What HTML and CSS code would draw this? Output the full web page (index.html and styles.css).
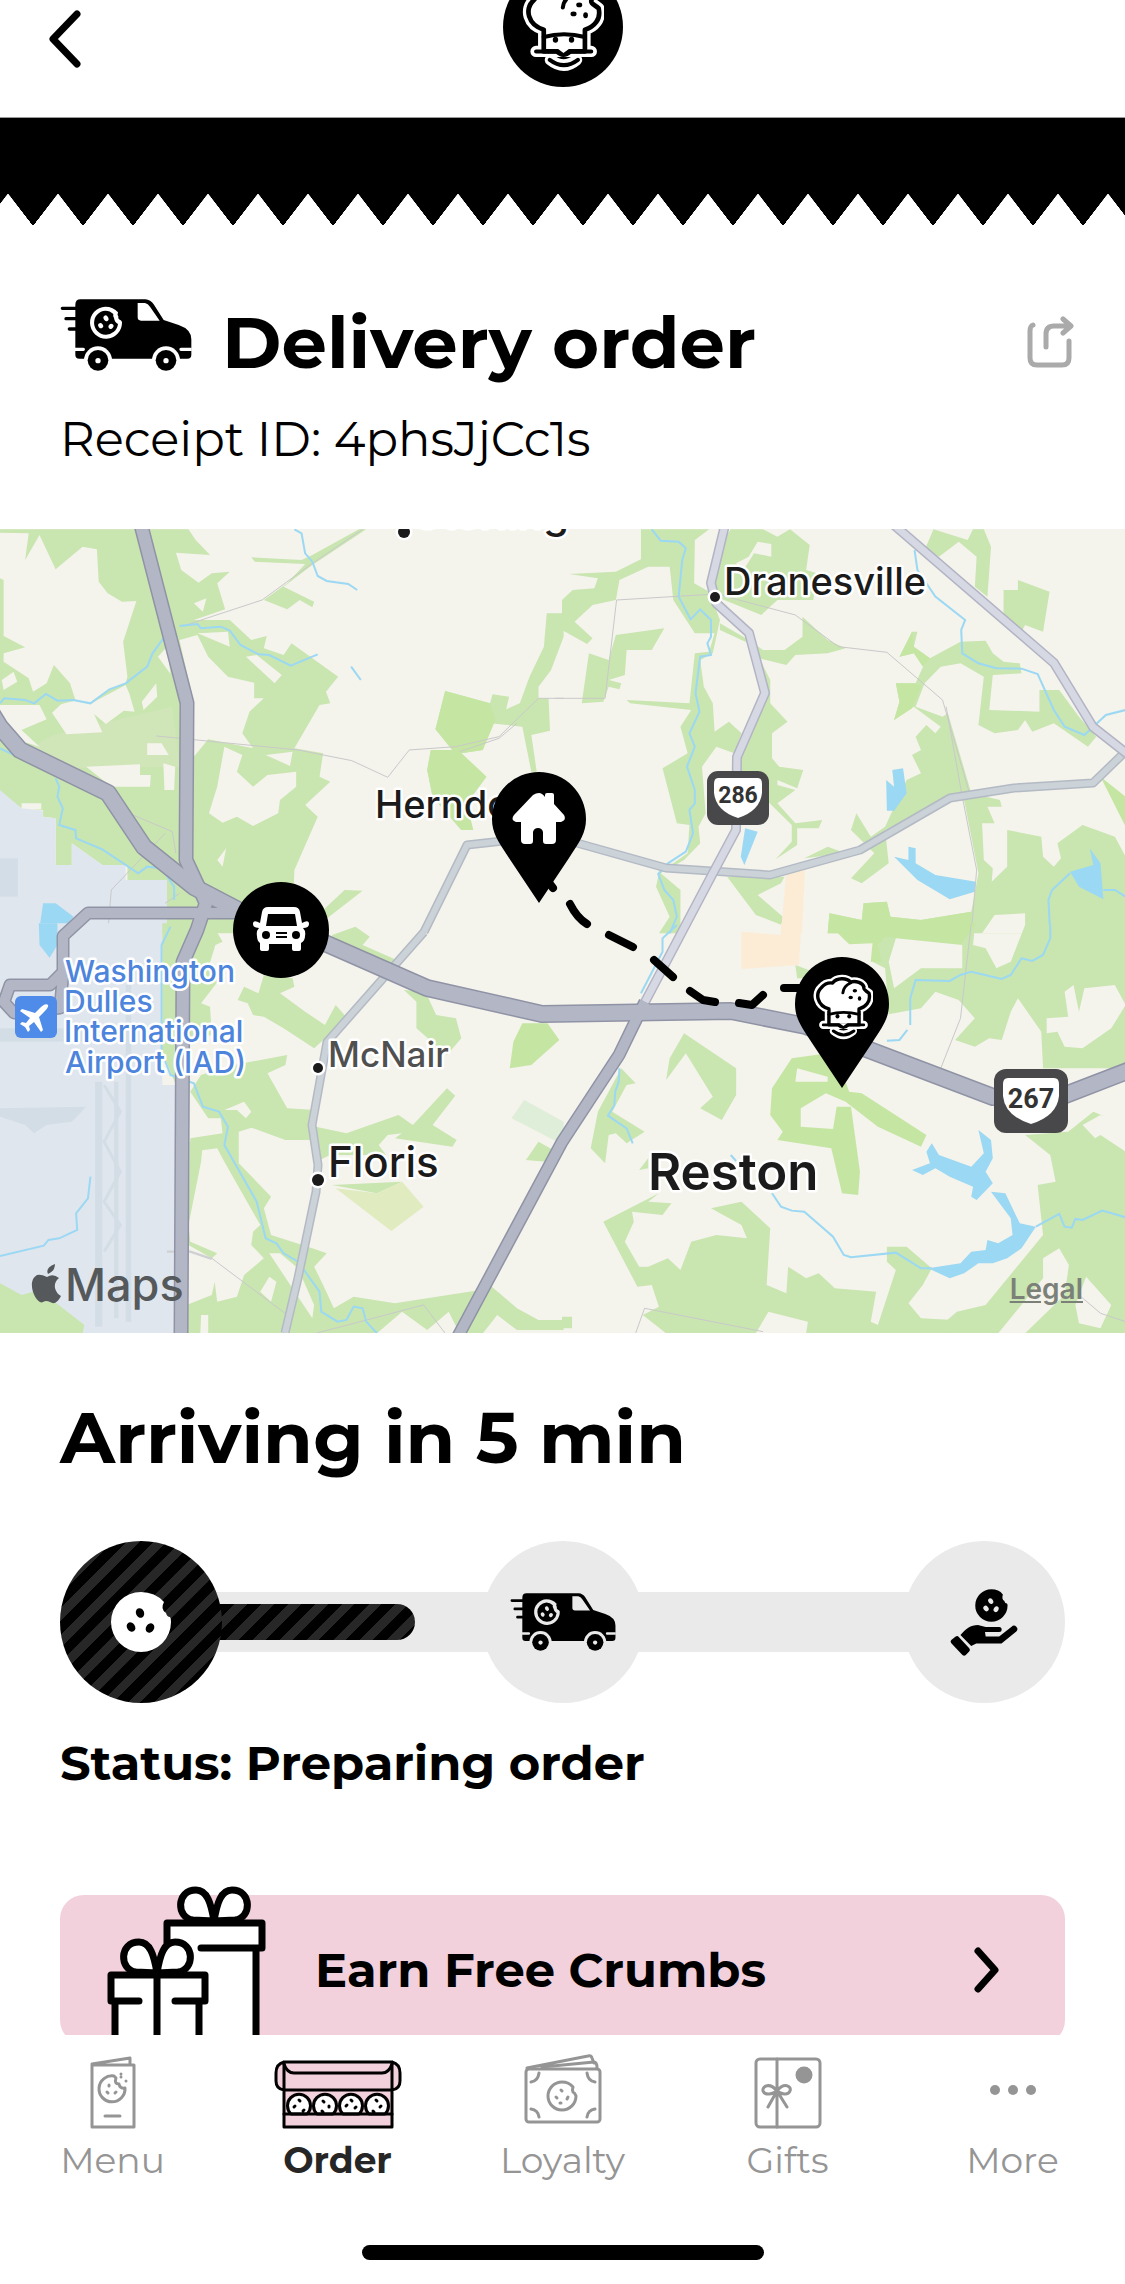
FILE: index.html
```html
<!DOCTYPE html>
<html lang="en">
<head>
  <meta charset="UTF-8">
  <meta name="viewport" content="width=device-width, initial-scale=1">
  <title>Delivery order</title>
  <link rel="stylesheet" href="styles.css">
</head>

<body>
  <!-- shared icons -->
  <svg class="sprite" aria-hidden="true">
    <symbol id="chef" viewBox="95 -52 245 268">
      <g fill="none" stroke-linecap="round" stroke-linejoin="round">
        <g stroke="#fff" stroke-width="34">
          <path d="M160 90C112 76 102 28 130 2C143-14 160-18 175-16C192-38 232-38 248-20C272-28 298-14 303 0C298 12 310 14 324 26C332 60 310 82 283 90V155H160Z"/>
          <path d="M137 155H302M180 180Q220 212 258 180"/>
        </g>
        <path stroke="#000" stroke-width="14" fill="#fff" d="M160 90C112 76 102 28 130 2C143-14 160-18 175-16C192-38 232-38 248-20C272-28 298-14 303 0C298 12 310 14 324 26C332 60 310 82 283 90V155H160Z"/>
        <path stroke="#000" stroke-width="12" d="M137 155H198Q218 176 240 155H302M178 180Q220 212 262 180M160 112Q220 96 283 112M217 24Q220-4 248-16"/>
      </g>
      <path fill="#fff" d="M203 148H235L219 160Z"/>
      <g>
        <ellipse cx="195" cy="120" rx="8" ry="9"/>
        <ellipse cx="243" cy="120" rx="8" ry="9"/>
        <ellipse cx="266" cy="16" rx="9" ry="7"/>
        <ellipse cx="249" cy="43" rx="9" ry="7"/>
        <ellipse cx="285" cy="47" rx="7" ry="9"/>
      </g>
    </symbol>

    <symbol id="van" viewBox="29 36 396 222">
      <path d="M75 56Q75 40 91 40H285Q301 41 310 55L340 102 385 117Q423 130 423 160V206Q423 218 411 218H87Q75 218 75 206Z"/>
      <path stroke="#000" stroke-width="10" stroke-linecap="round" d="M36 67H78M47 98H78M57 129H78"/>
      <g class="van-cut">
        <path d="M262 51H284Q293 53 299 62L328 104H272Q262 104 262 94Z"/>
        <path d="M165 62a48 48 0 1 0 50 46q-2-6-7-7q-6-3-4-10q-4-4-1-12q-14-17-38-17Z"/>
        <circle cx="143" cy="223" r="42"/>
        <circle cx="347" cy="223" r="42"/>
        <path d="M74 185H99a5 5 0 0 1 0 10H74ZM424 185H392a5 5 0 0 0 0 10H424Z"/>
      </g>
      <path d="M165 74a36 36 0 1 0 38 40q-10-5-12-18q-4-6-2-12q-10-10-24-10Z"/>
      <circle cx="143" cy="223" r="31"/>
      <circle cx="347" cy="223" r="31"/>
      <g class="van-cut">
        <circle cx="143" cy="224" r="8"/>
        <circle cx="347" cy="224" r="8"/>
        <ellipse cx="167" cy="97" rx="7" ry="9" transform="rotate(-30 167 97)"/>
        <ellipse cx="151" cy="119" rx="7" ry="8" transform="rotate(-40 151 119)"/>
        <ellipse cx="182" cy="121" rx="7" ry="8" transform="rotate(40 182 121)"/>
      </g>
    </symbol>

    <symbol id="pin" viewBox="0 0 94 131">
      <path d="M47 131L17 86C6 69 0 61 0 47A47 47 0 0 1 94 47C94 61 88 69 77 86Z"/>
    </symbol>
  </svg>

  <div class="app">
    <header class="header">
      <button type="button" class="icon-btn back" aria-label="Back">
        <svg width="34" height="60" viewBox="0 0 34 60"><path d="M29 5L5 30L29 55" fill="none" stroke="#000" stroke-width="7" stroke-linecap="round" stroke-linejoin="round"/></svg>
      </button>
      <svg class="logo" width="120" height="88" viewBox="0 33 120 88">
        <circle cx="60" cy="60" r="60"/>
        <use href="#chef" x="19" y="15" width="82" height="90"/>
      </svg>
    </header>

    <main class="main">
      <div class="awning"></div>

      <section class="order">
        <div class="title-row">
          <svg class="van" width="132" height="74"><use href="#van"/></svg>
          <h1>Delivery order</h1>
          <button type="button" class="icon-btn share" aria-label="Share">
            <svg width="48" height="52" viewBox="0 0 48 52" fill="none" stroke="#aaa" stroke-width="5" stroke-linecap="round" stroke-linejoin="round">
              <path d="M6 9Q3 10 3 15V42Q3 49 10 49H35Q42 49 42 42V25"/>
              <path d="M19 31V18Q19 10 27 10H42M36 3L44 10L36 17"/>
            </svg>
          </button>
        </div>
        <p class="receipt">Receipt ID: 4phsJjCc1s</p>
      </section>

      <div class="map">
        <svg class="map-art" viewBox="0 529 1125 804">
          <rect y="529" width="1125" height="804" fill="#f4f3ec"/>

          <!-- north west -->
          <g transform="translate(0 520) scale(.359 .3333)">
            <path class="park" d="M0 28H525L545 60 585 105 490 98 505 150 553 188 590 160 640 155 605 190 627 268 540 300 640 300 700 360 743 348 735 385 790 405 812 370 942 470 908 515 920 550 890 555 820 685 900 700 890 770 920 785 850 855 885 890 820 1050 818 1100 850 1240H460L465 1080H355V1035H285L200 970V1035H155V895L120 890V870L60 865 0 815Z"/>
            <path class="park" d="M700 112L840 120 870 105 1000 28H1020L870 135 790 200 875 245 870 262 835 240 800 268 735 240 800 190 850 132 710 125ZM1523 280H1570V350L1535 450 1500 500V535H1528L1532 632 1480 645 1495 755H1480L1455 620 1365 610 1345 690 1285 700 1355 770 1300 850 1318 930H1285L1205 830 1190 750 1200 690H1260L1213 628 1240 513 1365 550 1372 523 1418 530 1410 568 1448 550 1475 470 1515 380ZM880 1190L960 1110 1010 1112 905 1200Z"/>
            <path class="park-warm" d="M1240 513L1365 550 1380 600 1345 690 1285 700 1355 770 1300 850 1318 930H1285L1205 830 1190 750 1200 690H1260L1213 628Z"/>
            <path class="park-dim" d="M150 645L480 560 500 740 200 745 90 680Z"/>
            <path class="land" d="M0 38L80 40 70 120 110 45 155 148 230 80 270 88 275 185 300 220 340 245 380 243 343 365 355 470 350 490 300 510 250 550 210 540 195 490 150 435 130 490 92 515 80 475 10 425V400L70 382 10 348V180L0 175Z"/>
            <path class="land" d="M0 555H110L130 598 60 630 110 680 50 660 0 590ZM145 578L170 553 205 542 250 552 350 495 360 520 375 575 345 572 295 612 262 582 285 637 185 643ZM500 360L550 345 580 410 635 470 708 488V535H735L695 575 675 640 705 685 580 658 540 710V550ZM550 340L635 335 640 380ZM685 410L715 405 785 465 765 490ZM540 250L575 235 565 275ZM410 670H450L470 705H410ZM240 740L390 733V765H420L418 800H310ZM455 730L488 740 485 810H458ZM395 545L435 490 438 530 400 570ZM440 410L465 380 475 462ZM625 680L675 705 660 755 705 800 745 765 825 755V800L780 840 775 880 705 918 660 890 620 908 582 880 605 800ZM740 705L815 695 808 738ZM60 850H115V868H60ZM630 985L620 1040 605 1020ZM5 480L38 455 48 485 10 510Z"/>
            <path class="airfield" d="M0 810L60 865 120 872V890L155 895V1035H200V970L285 1035H350V1080H465V1240H0Z"/>
            <path fill="#d3dde7" d="M0 1015H50V1130H0Z"/>
            <path class="water" d="M120 1150H155L205 1190 165 1240H108Z"/>
            <path class="lane" d="M510 318L730 240 870 130 1010 28M435 648L830 690 980 722 1080 772 1140 690 1270 680 1390 650 1500 535H1570M1280 695L1390 655 1440 610M370 885L480 935 490 1000M460 940L310 1110 300 1240M500 1120L460 1150"/>
            <path class="stream" d="M820 28L840 40 850 100 870 125 885 168 910 183 970 192 995 210M0 550L12 535 70 540 95 550 128 522 160 542 205 540 252 550 305 508 350 490 410 440 425 400 455 355M500 318L550 312 560 325 615 320 640 332 670 375 720 403 750 405 810 437 885 403M978 440L1005 480M0 685L60 715M155 775L165 800 160 830 175 865 165 915 210 930 212 955 285 988 385 1060 410 1040 450 1045 485 1100V1140"/>
          </g>

          <!-- north east -->
          <g transform="translate(562 520) scale(.359 .3333)">
            <path class="park" d="M220 28H410L370 60 368 190 410 215 440 300 420 400 385 420 395 500 420 550 425 635 465 605 500 640 480 700 430 680 390 740 400 880 380 920 385 970 340 1020 275 1060 330 1110V1240H270L300 1190 262 1100 270 1060 350 1000 355 915 320 910 280 745 350 700 330 620 360 570 190 550 180 540 355 550 370 400 410 395 425 340H370L310 240 300 140H240L160 180 150 240 85 255 35 305 85 355 70 372 0 330V240L30 210 90 205 100 175 20 162 150 155 220 118Z"/>
            <path class="park" d="M150 345L285 325 250 390H180L175 465 130 480 165 490 160 508 130 500 115 545 55 550 75 400 130 420ZM470 28H560L600 50 635 28 690 75 680 150 710 160 700 240H600L555 285 440 235 410 190 450 60ZM440 310L520 360 560 390H620L670 350V290L740 360 790 385 740 400 650 405 625 435 550 415 580 480V550L628 605 585 640V715L605 740 672 750 655 805 600 780V795L650 810 600 850 650 910 725 900 715 925H655V975L595 1018 640 965V915L560 830 500 800 490 720 560 520 520 370 440 330Z"/>
            <path class="park" d="M990 335L980 380 1025 415 1110 365 1180 362 1200 400 1230 425 1275 430 1280 460 1200 465 1190 570 1330 575V510L1385 510 1440 590 1488 650 1465 680 1370 610 1310 635 1290 600 1270 630 1205 640 1160 615 1175 470 1110 430 1055 440 1010 490 985 560 1060 590 1075 580 1140 820 1220 840 1225 860H1185L1205 910H1170L1175 1020 1200 1045 1197 1085 1240 1040V930L1335 950 1340 1010 1370 1040 1390 1015 1380 970 1450 915 1540 950 1570 1010V1240H740L745 1180 835 1200 840 1150 905 1145 915 1190 1000 1200 1140 1175 1160 1060 1120 840H1070L900 930 910 1030 835 1090 805 1075 870 1000 805 930 820 880 860 950 900 920 960 780 1000 760 975 705 1000 690 985 650 1015 615 1040 640 1055 620 980 560 925 600 940 545 930 490H985L1010 430 980 400 940 410 975 335Z"/>
            <path class="park" d="M1230 210H1270V180L1358 215 1340 335 1290 315 1275 345 1230 300ZM1035 28L1130 60 1145 28H1175L1195 80 1185 230 1150 200 1155 110 1105 65 1050 110 1010 90ZM460 1070H620L610 1090 545 1125 615 1190 612 1215 540 1185ZM675 1015L740 980 790 1000Z"/>
            <path class="park-warm" d="M1500 770L1570 830V920ZM930 490H985L1000 500 975 565 925 600 940 545ZM740 1240L745 1180 835 1200 840 1150 905 1145 915 1190 1000 1200 1140 1175V1240ZM975 335L980 380 1025 415 1005 440 980 400 940 410Z"/>
            <path class="land" d="M545 65L583 72V110L535 100 500 160 485 130 520 110ZM1205 1185L1290 1180V1240H1170Z"/>
            <path fill="#fcecd6" d="M625 1050H677L668 1240H610Z"/>
            <path class="water" d="M903 780L925 800 920 750 950 745 960 820 925 872 905 872ZM510 925L545 935 508 1035 498 1010ZM925 1010L965 1020V980L985 985V1030L1040 1065 1153 1085 1150 1115 1080 1138 990 1080ZM1415 1055L1480 1035 1470 985 1500 1030 1508 1138 1440 1100Z"/>
            <path class="lane" d="M-20 535H120L152 240 430 222 650 285 770 380 905 397 1060 540 1135 820M1070 560L1115 830 1155 1050 1140 1240"/>
            <path class="stream" d="M250 28L275 62 325 65 345 85 335 120 325 230 358 298 385 268 415 300V350L405 370 415 405 385 410 372 520 383 575 355 640 370 680 348 740 370 810V850L355 870 365 940 345 995 295 1030 268 1062 285 1110 310 1140 320 1190 300 1240M982 90L990 150 1040 230 1123 300 1112 330 1115 400 1160 430 1210 445 1280 446 1325 462 1370 570 1400 620 1455 645 1515 585 1570 570M1415 1060L1365 1110 1355 1140 1360 1240M1508 1110H1540L1570 1130"/>
          </g>

          <!-- south west -->
          <g transform="translate(0 925) scale(.359 .3333)">
            <path class="airfield" d="M0-5H452V480H490V1225H0Z"/>
            <path class="runway" d="M265 470V1205H285V470ZM318 470V1180H330V470ZM350 180V1190H366V180ZM0 310H260V350H0ZM0 550L240 545 200 590 130 600 95 625 70 600 0 575Z"/>
            <path class="taxiway" d="M290 480L335 560 290 650 335 740 290 830 335 900 290 980"/>
            <path class="park" d="M452-5H590L620 50 600 60 580 130 610 165 560 235 585 245 590 330 530 345H490V480L452 380ZM925 30L990 5 1030 35 1010 60 1105 105 1100 125 920 80ZM680 185L720 205 735 150 815 160 820 185 780 205 850 260 905 300 935 240 968 280 875 370 790 310 735 275 705 270 690 235 662 225ZM1125 195L1185 200 1215 270 1270 280 1285 340 1245 390 1160 310V230Z"/>
            <path class="park" d="M560 450L650 420 800 390 795 420 745 445 800 550 880 555V605L965 625 1110 570 1150 600 1245 490 1268 512 1205 600 1272 645 1260 665 1100 640 1120 625 1080 630 1055 660 1075 690 920 690 880 710 865 645H795L700 608 665 620V715L755 815 735 850 755 930 870 970 910 985 875 1025 900 1080 930 1150 985 1115 1100 1135 1320 1098 1370 1085 1440 1150 1500 1185H1570V1215H1440L1385 1170 1345 1225H1280L1250 1160 1190 1215 1120 1160 1050 1225H520V1140L590 1110 598 1070 605 1130 660 1115 680 1050 735 1000 700 960 705 920 725 900 625 710 605 670 530 680V640L620 625 615 580H580L530 500Z"/>
            <path class="park" d="M528 650L565 655 560 710 525 900 530 950 605 985 590 1000 525 960ZM925 780L1120 770 1050 805ZM1500 650L1550 680 1520 710 1465 705ZM0 1075L60 1110 110 1095 235 1200 230 1225H0Z"/>
            <path class="park-warm" d="M1455 295H1525L1558 345 1480 420 1420 430 1430 350Z"/>
            <path fill="#e0ecc0" d="M935 790L1050 805 1120 770 1180 845 1090 918Z"/>
            <path fill="#deeed8" d="M1460 525L1570 590V660L1425 580Z"/>
            <path class="land" d="M750 985L780 985 830 1030 875 1140 870 1180ZM725 1100L750 1055 770 1070 755 1130ZM560 1170H580V1225H558ZM680 530L700 560 685 580 660 555 625 555Z"/>
            <path class="water" d="M108-5H160V60L138 98 110 60Z"/>
            <path class="lane" d="M590 1000L800 1170M880 1225L1180 1140 1240 1225"/>
            <path stroke="#cfd0d2" stroke-width="7" fill="none" d="M465 980H530L590 1002"/>
            <path class="stream" d="M475 5L450 60V380L475 450 540 475 565 545 610 560 635 605 625 660 670 745 715 830 740 940 770 955 790 985 830 1010 890 1100 895 1160 940 1190 965 1185 985 1145 1010 1150 1020 1190 1050 1225M0 993L122 962 135 945 165 940 215 915 212 865 245 820 252 755"/>
          </g>

          <!-- south east -->
          <g transform="translate(562 925) scale(.359 .3333)">
            <path class="park" d="M1150 0L1145 60 1180 70 1210 130 1250 110 1290 0H1570V430H1340L1335 320 1270 220 1250 260 1225 345 1190 340 1150 365 1095 345 1150 280 1105 225 1040 200 1000 250 910 268 900 130 865 110 900-2ZM1290 630L1410 620 1480 560 1570 600V1225H1030L1100 1160 1180 1140 1340 930 1325 780 1375 770 1360 690ZM340 325L485 430V510L445 585 385 550 420 515 345 385 290 465 300 400ZM165 430L205 475 180 480 160 520 140 560 230 620 180 655 150 625 130 630 120 715 80 670 100 560ZM215 735L240 700V730ZM650 120L700 140V160H655Z"/>
            <path class="park" d="M115 890L270 805 240 830 305 835 280 870 195 860 200 890 175 950 215 1025H240L295 1000 330 1035 360 950 430 930 515 940 500 900 415 850 500 830 580 910 570 1080 625 1105 630 1025 680 1060 715 1045 760 1090 875 1100 860 1190 880 1200 930 1035 905 1010V965H960L1030 1030 1005 1080 965 1135 1000 1180 1090 1185 1190 1150 1180 1200 1060 1225H680L685 1190 575 1160 540 1225H290L225 1170 270 1145 250 1080 210 1085ZM0 1175H28V1210H0Z"/>
            <path class="park-warm" d="M740-5H1155L1110 60 900 35 880 60 890 110 860 110 865 55 800 58ZM640 400L740 385 790 470 800 500 835 505 1015 630 1000 665 880 605 790 530 735 505 665 550V605L755 612 765 545H805L830 740 825 810 780 805 750 670 600 645 615 620 580 570 585 490Z"/>
            <path class="land" d="M930 40L1115 60V130H1000L925 190 910 110ZM1350 280L1410 275 1400 200 1425 180 1440 260 1455 190 1540 180 1570 240 1530 310 1450 370 1400 365 1380 320 1350 325ZM655 430L740 455V470H650ZM1385 970L1340 1000V1060L1215 1225H1290L1400 1110 1412 1020ZM1430 1140L1460 1055 1530 1140 1500 1210 1440 1195ZM1450 600L1500 570 1570 590V680L1500 630 1485 640Z"/>
            <path fill="#fcecd6" d="M500 20L610 30V-5H667L660 120 500 132Z"/>
            <path class="water" d="M975 735L1025 715 1015 680 1030 655 1050 690 1140 725 1175 685 1160 615 1195 645 1200 700 1180 740 1200 775 1155 825 1140 815 1145 785 1080 755 1040 730 1005 750ZM1195 800L1235 805 1275 895 1320 905 1280 970 1240 1000 1200 1015H1160L1120 1045 1080 1060 1020 1030 1110 1015 1140 980 1180 975 1185 945 1215 955 1255 930 1250 880Z"/>
            <path class="lane" d="M1140-5L1110 280 1055 430M205 1225L230 1150 560 1220M1440 1110L1500 1165 1570 1190"/>
            <path class="stream" d="M320 0L280 40V80L220 205M1360 0V40L1340 90 1310 108 1280 100 1250 150 1225 162 1140 140 1110 150 1080 168 985 165 970 220V300M962 315L940 345 905 347M160 430L158 470 148 500 146 540 128 572 180 610 197 655M470 690L485 708M585 805L610 845 640 857 675 860 755 935 785 990 805 997 930 983 1000 1030H1030M1320 905L1385 867 1400 905 1420 908 1430 882 1450 885 1505 857 1570 877"/>
          </g>

          <g class="roads">
            <path class="road-edge" d="M424 932L467 845 503 841 555 837 584 845 666 868 770 875 860 850 950 798 1014 788 1093 783 1125 752M424 932L327 1042 312 1125 318 1165 316 1192 298 1278 285 1333"/>
            <path class="road-fill" d="M424 932L467 845 503 841 555 837 584 845 666 868 770 875 860 850 950 798 1014 788 1093 783 1125 752M424 932L327 1042 312 1125 318 1165 316 1192 298 1278 285 1333"/>
            <path class="route-edge" d="M725 525L711 583 716 603 749 633 765 693 737 757 736 830 713 873 645 1002M894 525L1054 663 1093 727 1130 756"/>
            <path class="route-fill" d="M725 525L711 583 716 603 749 633 765 693 737 757 736 830 713 873 645 1002M894 525L1054 663 1093 727 1130 756"/>
            <g fill="none" stroke="#8f93a5" stroke-linejoin="round">
              <path stroke-width="13" d="M240 913H88L63 936V972L50 985H10L4 1002 14 1013 60 1008 63 975M645 1002L636 1020 619 1055 562 1142 456 1340"/>
              <path stroke-width="15" d="M141 525L187 703 186 860 206 903 197 930 183 962 181 1340"/>
              <path stroke-width="18" d="M-8 714L0 727 20 750 108 793 144 847 194 887 240 911 327 944 427 988 542 1014 731 1011 806 1026 993 1097H1060L1130 1070"/>
            </g>
            <g fill="none" stroke="#b3b7c5" stroke-linejoin="round">
              <path stroke-width="10" d="M240 913H88L63 936V972L50 985H10L4 1002 14 1013 60 1008 63 975M645 1002L636 1020 619 1055 562 1142 456 1340"/>
              <path stroke-width="12" d="M141 525L187 703 186 860 206 903 197 930 183 962 181 1340"/>
              <path stroke-width="15" d="M-8 714L0 727 20 750 108 793 144 847 194 887 240 911 327 944 427 988 542 1014 731 1011 806 1026 993 1097H1060L1130 1070"/>
            </g>
          </g>

          <g class="places">
            <circle cx="404" cy="532" r="6"/>
            <circle cx="715" cy="597" r="5"/>
            <circle cx="318" cy="1068" r="5"/>
            <circle cx="318" cy="1180" r="6"/>
            <text x="414" y="528" font-size="42">Sterling</text>
            <text x="724" y="595" font-size="38">Dranesville</text>
            <text x="375" y="818" font-size="38">Herndon</text>
            <text x="328" y="1067" font-size="35" class="minor">McNair</text>
            <text x="328" y="1177" font-size="42">Floris</text>
            <text x="648" y="1190" font-size="51" class="town">Reston</text>
          </g>

          <rect x="15" y="996" width="42" height="42" rx="6" fill="#4f8be8"/>
          <path fill="#fff" d="M48 1005c-2-2-6 1-8 3l-5 5-13-4-2 2 10 7-4 5-4-1-2 2 5 3 3 5 2-2-1-4 5-4 7 10 2-2-4-13 5-5c2-2 5-5 4-7Z"/>
          <g class="airport">
            <text x="65" y="982">Washington</text>
            <text x="64" y="1012">Dulles</text>
            <text x="64" y="1042">International</text>
            <text x="65" y="1073">Airport (IAD)</text>
          </g>

          <!-- route shields -->
          <rect x="707" y="771" width="62" height="54" rx="11" fill="#48484a"/>
          <path fill="#fff" d="M718 778H758Q762 778 762 784V793Q760 811 738 818Q716 811 714 793V784Q714 778 718 778Z"/>
          <text class="shield" x="738" y="803" font-size="23">286</text>
          <rect x="994" y="1069" width="74" height="64" rx="12" fill="#48484a"/>
          <path fill="#fff" d="M1008 1078H1054Q1059 1078 1059 1084V1096Q1057 1116 1031 1124Q1005 1116 1003 1096V1084Q1003 1078 1008 1078Z"/>
          <text class="shield" x="1031" y="1108" font-size="27">267</text>

          <!-- delivery route -->
          <path fill="none" stroke="#000" stroke-width="8" stroke-linecap="round" stroke-linejoin="round" d="M550 884L553 888M570 904Q577 918 587 924M609 935L633 947M654 960L673 977M690 991L703 1000 715 1002M739 1003L752 1005 763 995M784 988H800"/>

          <use href="#pin" x="492" y="772" width="94" height="131"/>
          <path fill="#fff" d="M539 793q3 0 6 4v-2q0-2 2-2h5q2 0 2 2v9l10 11q3 5-3 7h-5v18q0 4-4 4h-6q-3 0-3-3v-9q-1-4-5-4t-5 4v9q0 3-3 3h-5q-4 0-4-4v-18h-5q-6-2-2-7l19-20q3-2 6-2Z"/>
          <use href="#pin" x="795" y="957" width="94" height="131"/>
          <use href="#chef" x="813" y="974" width="60" height="66"/>

          <circle cx="281" cy="930" r="48"/>
          <path fill="#fff" d="M268 907h26q5 0 6 5l2 11q7-4 7 1 0 4-6 4 3 3 2 8 0 5-4 7v6q0 2-2 2h-5q-2 0-2-2v-5h-23v5q0 2-2 2h-4q-3 0-3-2v-6q-3-2-3-7-1-5 2-8-6 0-6-4 0-5 7-1l2-11q1-5 6-5Z"/>
          <path d="M268 914h27l2 12h-31ZM276 932h11v2h-11ZM276 936h11v2h-11Z"/>
          <circle cx="266" cy="935" r="4"/>
          <circle cx="296" cy="935" r="4"/>

          <!-- map provider -->
          <g fill="#55595c">
            <path d="M55 1264q0 7-7 10-3-6 7-10ZM47 1277q6-4 12 1-5 4-4 10 1 5 6 8-5 10-11 6-4-2-7 0c-6 4-18-20-6-27q4-1 10 2Z"/>
            <text x="65" y="1301" font-size="45" class="brand">Maps</text>
          </g>
        </svg>
        <a class="legal" href="#">Legal</a>
      </div>

      <section class="progress">
        <h2>Arriving in 5 min</h2>
        <div class="tracker">
          <div class="fill"></div>
          <div class="step active">
            <svg width="62" height="62" viewBox="0 0 62 62">
              <path fill="#fff" d="M31 1a30 30 0 1 0 30 30q0-4-1-5-3 0-4-4-6-4-2-11Q45 1 31 1Z"/>
              <ellipse cx="30" cy="22" rx="4" ry="5" transform="rotate(-25 30 22)"/>
              <ellipse cx="21" cy="36" rx="4" ry="5" transform="rotate(-35 21 36)"/>
              <ellipse cx="40" cy="37" rx="4" ry="5" transform="rotate(35 40 37)"/>
            </svg>
          </div>
          <div class="step">
            <svg width="106" height="60"><use href="#van"/></svg>
          </div>
          <div class="step">
            <svg width="70" height="69" viewBox="150 140 206 205">
              <path d="M275 144a48 48 0 1 0 48 48q0-4-2-6-6 0-8-8-8-4-4-19-12-15-34-15Z"/>
              <path fill-rule="evenodd" d="M183 280C198 262 213 250 235 250L258 256H298a7 7 0 0 1 0 15H256L258 284H298L335 255a9 9 0 0 1 14 14L305 305H230L215 312Z"/>
              <path stroke="#000" stroke-width="14" stroke-linejoin="round" d="M161 299L173 290 204 324 194 334Z"/>
              <g class="van-cut">
                <ellipse cx="273" cy="179" rx="7" ry="9" transform="rotate(-30 273 179)"/>
                <ellipse cx="259" cy="201" rx="7" ry="9" transform="rotate(-40 259 201)"/>
                <ellipse cx="289" cy="203" rx="7" ry="9" transform="rotate(30 289 203)"/>
              </g>
            </svg>
          </div>
        </div>
        <p class="status">Status: Preparing order</p>

        <a class="promo" href="#">
          <svg class="gifts" width="160" height="168" viewBox="0 0 160 168" fill="#fff" stroke="#000" stroke-width="7" stroke-linejoin="round" stroke-linecap="round">
            <path stroke="none" d="M60 37H155V62H149V168H60Z"/>
            <path fill="none" d="M60 62V37H155V62H94M149 62V168"/>
            <path d="M107 35C104 17 100 4 89 4C69 4 69 32 86 34ZM107 35C110 17 114 4 125 4C145 4 145 32 128 34Z"/>
            <path stroke="none" d="M4 89H98V115H92V168H8V115H4Z"/>
            <path fill="none" d="M32 115H4V89H98V115H68M8 115V168M92 115V168M50 89V168"/>
            <path d="M50 87C47 69 43 56 32 56C12 56 12 84 29 86ZM50 87C53 69 57 56 68 56C88 56 88 84 71 86Z"/>
          </svg>
          <span>Earn Free Crumbs</span>
          <svg class="chevron" width="28" height="46" viewBox="0 0 28 46"><path d="M5 4L22 23L5 42" fill="none" stroke="#000" stroke-width="7" stroke-linecap="round" stroke-linejoin="round"/></svg>
        </a>
      </section>
    </main>

    <nav class="tabs">
      <a class="tab" href="#">
        <svg width="46" height="76" viewBox="0 0 46 76" fill="none" stroke="#959595" stroke-width="3" stroke-linejoin="round" stroke-linecap="round">
          <path d="M2 11H44V73H2ZM2 10L40 4V10M15 62H30"/>
          <path d="M24 22a13 13 0 1 0 11 12q-5 1-6-4-5 0-3-6Z"/>
          <path d="M19 31v1M17 38l1 1M26 38l-1 1M31 23v0M36 27v0M31 20v0"/>
        </svg>
        Menu
      </a>
      <a class="tab current" href="#">
        <svg width="130" height="76" viewBox="0 0 128 76" stroke="#000" stroke-width="3" stroke-linejoin="round">
          <path fill="#f2d0dc" d="M10 8Q2 10 2 19V27Q2 35 10 36M118 8Q126 10 126 19V27Q126 35 118 36M10 8H118V73H10Z"/>
          <path fill="none" d="M10 36H118M10 10Q13 19 20 19H108Q115 19 118 10"/>
          <path fill="#fff" d="M17 60a11.5 11.5 0 1 1 16 0ZM43 60a11.5 11.5 0 1 1 16 0ZM69 60a11.5 11.5 0 1 1 16 0ZM95 60a11.5 11.5 0 1 1 16 0Z"/>
          <path fill="none" stroke-linecap="round" d="M10 60H118M25 46l1 1M20 53l1-1M29 57l1-1M49 47l1 1M55 52v1M48 57l1 1M77 46l1 1M72 52l1-1M81 54l1-1M102 46l1 1M107 52l-1 1M99 57l1 1"/>
        </svg>
        Order
      </a>
      <a class="tab" href="#">
        <svg width="78" height="76" viewBox="0 0 78 76" fill="none" stroke="#959595" stroke-width="3" stroke-linejoin="round" stroke-linecap="round">
          <rect x="2" y="15" width="74" height="53" rx="3"/>
          <path d="M3 14L64 2Q67 1 68 4L70 9M18 13L70 8Q73 8 73 14M7 28Q14 27 15 19M71 28Q64 27 63 19M7 55Q14 56 15 63M71 55Q64 56 63 63"/>
          <path d="M38 28a14 14 0 1 0 14 14q-1-3-3-4-1-2 0-5-4-5-11-5Z"/>
          <path d="M37 36l1 1M32 43l1 1M36 49l1 0M44 43l-1 2"/>
        </svg>
        Loyalty
      </a>
      <a class="tab" href="#">
        <svg width="68" height="76" viewBox="0 0 68 76" fill="none" stroke="#959595" stroke-width="3" stroke-linejoin="round" stroke-linecap="round">
          <rect x="2" y="5" width="64" height="68" rx="4"/>
          <path d="M23 5V73M23 37C16 28 8 32 9 37C11 42 19 40 23 37C30 28 38 32 36 37C34 42 27 40 23 37L14 53M23 37L33 53"/>
          <circle cx="50" cy="21" r="7" fill="#959595"/>
        </svg>
        Gifts
      </a>
      <a class="tab" href="#">
        <svg width="48" height="76" viewBox="0 0 48 76" fill="#959595">
          <circle cx="6" cy="36" r="5"/>
          <circle cx="24" cy="36" r="5"/>
          <circle cx="42" cy="36" r="5"/>
        </svg>
        More
      </a>
      <div class="home-bar"></div>
    </nav>
  </div>
</body>
</html>
```
FILE: styles.css
```css
* {
  box-sizing: border-box;
}

body {
  margin: 0;
  background: #fff;
  color: #000;
  font-family: 'Montserrat', 'Inter', sans-serif;
}

h1, h2, p {
  margin: 0;
}

a {
  color: inherit;
  text-decoration: none;
}

svg {
  display: block;
}

.sprite {
  position: absolute;
  width: 0;
  height: 0;
}

.van-cut {
  fill: var(--icon-bg, #fff);
}

.app {
  display: flex;
  flex-direction: column;
  height: 100vh;
}

.icon-btn {
  padding: 0;
  border: none;
  background: none;
  cursor: pointer;
}

/* header */
.header {
  display: grid;
  grid-template-columns: 1fr auto 1fr;
  flex: none;
  height: 118px;
  padding: 0 48px;
  border-bottom: 1px solid #999;
}

.back {
  justify-self: start;
  align-self: start;
  margin-top: 9px;
}

.main {
  flex: 1;
  min-height: 0;
  overflow: hidden;
}

.awning {
  height: 109px;
  background:
    linear-gradient(#000, #000) 0 0 / 100% 76px no-repeat,
    conic-gradient(from -38deg at 50% 100%, transparent, #000 1deg 75deg, transparent 76deg) 8px 75px / 50px 33px repeat-x;
}

/* order summary */
.order {
  padding: 71px 50px 60px 60px;
}

.title-row {
  display: flex;
  align-items: center;
  gap: 30px;
}

.van {
  align-self: flex-start;
  flex: none;
}

h1, h2 {
  font-size: 72px;
  line-height: 88px;
  font-weight: 700;
}

.share {
  margin-left: auto;
}

.receipt {
  margin-top: 23px;
  font-size: 48px;
  line-height: 60px;
}

/* map */
.map {
  position: relative;
}

.map-art {
  width: 100%;
  height: auto;
}

.park { fill: #c9e5b0; }
.park-warm { fill: #c5e6a2; }
.park-dim { fill: #d0e6b9; }
.land { fill: #f4f3ec; }
.water { fill: #9bd8f3; }
.airfield { fill: #e0e6ee; }
.runway { fill: #d3dde5; }

.lane,
.stream,
.taxiway {
  fill: none;
  stroke: #c9c9ca;
  stroke-width: 1px;
  vector-effect: non-scaling-stroke;
}

.stream {
  stroke: #9bd8f3;
  stroke-width: 2px;
}

.taxiway {
  stroke: #d3dde5;
  stroke-width: 3px;
}

.roads path {
  fill: none;
  stroke-linejoin: round;
}

.road-edge { stroke: #b3bac4; stroke-width: 9px; }
.road-fill { stroke: #cbd2d8; stroke-width: 6px; }
.route-edge { stroke: #b2b4c4; stroke-width: 10px; }
.route-fill { stroke: #d6d8e4; stroke-width: 7px; }

.map-art text {
  font-family: 'Inter', sans-serif;
  font-weight: 500;
}

.places text,
.airport text,
.places circle {
  stroke: #fff;
  stroke-width: 5px;
  stroke-linejoin: round;
  paint-order: stroke;
}

.places {
  fill: #1b1b1b;
}

.places .minor {
  fill: #505050;
}

.places .town {
  font-weight: 600;
}

.airport text {
  fill: #4d84dc;
  font-size: 30px;
}

.map-art .shield {
  fill: #333;
  font-family: 'Roboto', sans-serif;
  font-weight: 700;
  text-anchor: middle;
}

.legal {
  position: absolute;
  right: 42px;
  bottom: 28px;
  color: #7b8078;
  font-family: 'Inter', sans-serif;
  font-size: 28px;
  line-height: 32px;
  font-weight: 600;
  text-decoration: underline;
}

/* delivery progress */
.progress {
  padding: 60px 60px 0;
}

.tracker {
  --icon-bg: #eaeaea;
  position: relative;
  display: flex;
  justify-content: space-between;
  margin-top: 60px;
  background: linear-gradient(#eaeaea, #eaeaea) center / calc(100% - 100px) 60px no-repeat;
}

.step {
  position: relative;
  display: flex;
  align-items: center;
  justify-content: center;
  width: 162px;
  height: 162px;
  border-radius: 50%;
  background: #eaeaea;
}

.fill,
.active {
  background: repeating-linear-gradient(135deg, #000 0 10px, #272727 10px 19px);
}

.fill {
  position: absolute;
  top: 63px;
  left: 80px;
  width: 275px;
  height: 36px;
  border-radius: 18px;
}

.status {
  margin-top: 30px;
  font-size: 48px;
  line-height: 60px;
  font-weight: 700;
}

.promo {
  display: flex;
  align-items: center;
  height: 149px;
  margin-top: 102px;
  padding: 0 64px 0 47px;
  border-radius: 24px;
  background: #f2d0dc;
  font-size: 48px;
  font-weight: 700;
}

.gifts {
  flex: none;
  margin-right: 48px;
}

.chevron {
  margin-left: auto;
}

/* tab bar */
.tabs {
  display: grid;
  grid-template-columns: repeat(5, 1fr);
  flex: none;
  padding: 19px 0 24px;
  background: #fff;
}

.tab {
  display: flex;
  flex-direction: column;
  align-items: center;
  gap: 8px;
  color: #959595;
  font-size: 36px;
  line-height: 44px;
}

.tab.current {
  color: #262626;
  font-weight: 700;
}

.home-bar {
  grid-column: 1 / -1;
  justify-self: center;
  width: 402px;
  height: 15px;
  margin-top: 63px;
  border-radius: 8px;
  background: #000;
}
```
